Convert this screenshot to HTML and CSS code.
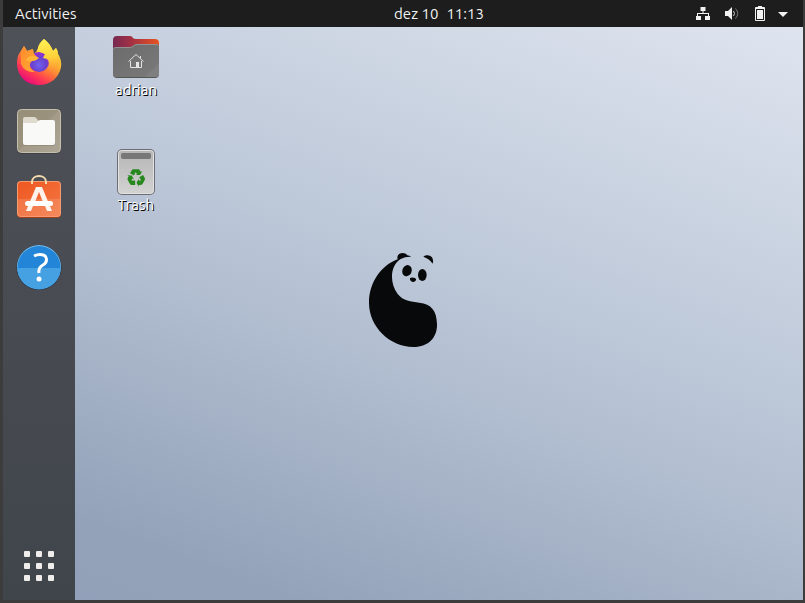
FILE: index.html
```html
<!DOCTYPE html>
<html lang="en">
<head>
<meta charset="utf-8">
<title>Desktop</title>
<link rel="stylesheet" href="styles.css">
</head>
<body>
<div class="screen">
  <div class="wallpaper">
    <svg class="panda" viewBox="-6 0 330 360" aria-hidden="true">
      <path d="M143 58C95 75 56 128 57 190C58 262 120 321 190 321C238 321 262 290 261 252C260 212 244 192 208 188C182 185 160 183 143 162C118 130 120 76 152 57Q166 49 184 50Q178 47 172 46C166 37 150 36 144 46Q141 50 143 58Z"/>
      <path d="M220 50C229 43 242 45 247 53Q251 61 248 71Q238 56 220 50Z"/>
      <ellipse cx="171" cy="92" rx="14" ry="17" transform="rotate(22 171 92)"/>
      <ellipse cx="217" cy="105" rx="13" ry="18"/>
      <path d="M180 115Q184 110 195 114Q201 118 196 123Q189 129 182 122Q179 119 180 115Z"/>
    </svg>
  </div>

  <header class="topbar">
    <button class="bar-button activities" type="button">Activities</button>
    <button class="bar-button clock" type="button"><span>dez 10</span><span>11:13</span></button>
    <button class="bar-button status" type="button" aria-label="System menu">
      <svg viewBox="0 0 16 16"><path d="M5.500 1h5v4h-2v2H14v3h1v4h-5v-4h3V8H3v2h3v4H1v-4h1V7h5.500V5h-2z"/></svg>
      <svg viewBox="0 0 16 16"><path d="M2 5h3l4-4v13l-4-4H2z"/><path class="wave" d="M10.500 5Q12.500 7.500 10.500 10"/><path class="wave faint" d="M12.500 2.500Q17 7.500 12.500 12.500"/></svg>
      <svg viewBox="0 0 16 16"><path fill-rule="evenodd" d="M7 0h4v1h2q1 0 1 1v12q0 1-1 1H5q-1 0-1-1V2q0-1 1-1h2zM5 3v11h8V3zM6 4h6v9H6z"/></svg>
      <svg class="caret" viewBox="2 0 8 16"><path d="M1 6h10l-5 5z"/></svg>
    </button>
  </header>

  <nav class="dock" aria-label="Applications">
    <button class="app" type="button" aria-label="Firefox">
      <svg viewBox="0 0 48 48">
        <defs>
          <linearGradient id="fox" x1=".85" y1=".12" x2=".3" y2="1"><stop offset="0" stop-color="#fff04a"/><stop offset=".35" stop-color="#ffbc2e"/><stop offset=".58" stop-color="#ff7139"/><stop offset=".78" stop-color="#ff3655"/><stop offset="1" stop-color="#e5097f"/></linearGradient>
          <linearGradient id="flame" x1=".4" y1="0" x2=".5" y2="1"><stop offset="0" stop-color="#fff253"/><stop offset=".5" stop-color="#ffd23a"/><stop offset="1" stop-color="#ff6c38" stop-opacity="0"/></linearGradient>
          <radialGradient id="globe" cx=".5" cy=".65" r=".65"><stop offset="0" stop-color="#7360ef"/><stop offset=".55" stop-color="#6a42cd"/><stop offset="1" stop-color="#9b2bd2"/></radialGradient>
          <linearGradient id="head" x1="0" y1="0" x2="1" y2="1"><stop offset="0" stop-color="#ff8a2c"/><stop offset="1" stop-color="#ffad35"/></linearGradient>
        </defs>
        <path fill="url(#fox)" d="M29 0C33 3 36 7 38 12L41 9Q43 12 43 15Q47 21 46 28C44 39 35 46 24 46C11 46 2 37 2 24Q2 16 6 12L9 7Q11 10 12 12L18 10Q18 13 19 15Q24 10 23 8Q25 3 29 0Z"/>
        <circle cx="24" cy="23" r="10" fill="url(#globe)"/>
        <path fill="url(#flame)" d="M29 0C33 3 36 7 38 12L41 9Q43 12 43 15Q47 23 44 32C42 38 35 40 28 35C34 32 36 25 32 20L28 19L30 15Q25 13 22 12Q24 4 29 0Z"/>
        <path fill="url(#head)" d="M6 12L9 7L12 12L18 10Q18 14 20 16Q22 18 23 19Q21 22 17 22C13 25 15 31 20 33Q10 34 6 25Z"/>
        <path fill="#ffb638" d="M11 21Q14 16 20 17L24 19Q21 22 17 22Q13 23 11 21Z"/>
      </svg>
    </button>
    <button class="app" type="button" aria-label="Files">
      <svg viewBox="0 0 48 48">
        <defs><linearGradient id="tan" x1="0" y1="0" x2="1" y2="1"><stop offset="0" stop-color="#978f79"/><stop offset=".48" stop-color="#9a927d"/><stop offset=".5" stop-color="#a39b88"/><stop offset="1" stop-color="#ada694"/></linearGradient></defs>
        <rect x="2" y="3" width="44" height="44" rx="5" fill="#34363a" opacity=".6"/>
        <rect x="2.500" y="2.500" width="43" height="43" rx="4" fill="url(#tan)" stroke="#c5bfae"/>
        <path d="M8 15V12Q8 10 10 10H19Q21 10 22 12L24 15L20 18H8Z" fill="#dedace"/>
        <path d="M8 16H20Q22 16 23 15Q24 13 26 13H38Q40 13 40 15V37Q40 39 38 39H10Q8 39 8 37Z" fill="#89816d" opacity=".6"/>
        <path d="M8 16H20Q22 16 23 14Q24 13 26 13H38Q40 13 40 15V36Q40 38 38 38H10Q8 38 8 36Z" fill="#f9f9f8"/>
      </svg>
    </button>
    <button class="app" type="button" aria-label="Ubuntu Software">
      <svg viewBox="0 0 48 48">
        <defs><linearGradient id="orange" x1="0" y1="0" x2="1" y2="1"><stop offset="0" stop-color="#ef5721"/><stop offset="1" stop-color="#f37843"/></linearGradient></defs>
        <rect x="2" y="7" width="44" height="36" rx="4" fill="#a43f1e"/>
        <rect x="2" y="6" width="44" height="36" rx="4" fill="#f69a70"/>
        <rect x="3" y="7" width="42" height="34" rx="3" fill="url(#orange)"/>
        <path d="M3 24H45V38Q45 41 42 41H6Q3 41 3 38Z" fill="#fff" opacity=".13"/>
        <path d="M17 9V7C17-1 31-1 31 7V9" fill="none" stroke="#f5dcae" stroke-width="2"/>
        <path fill-rule="evenodd" d="M21 12H27L37 36H32L30 31H18L16 36H11ZM24 17L20 27H28Z" fill="#fff3ec"/>
        <rect x="10" y="26" width="28" height="5" rx="2.500" fill="#fff"/>
      </svg>
    </button>
    <button class="app" type="button" aria-label="Help">
      <svg viewBox="0 0 48 48">
        <circle cx="24" cy="24.500" r="22.500" fill="#253342"/>
        <circle cx="24" cy="24" r="22" fill="#78bdeb"/>
        <circle cx="24" cy="24.500" r="21.500" fill="#2385d8"/>
        <path d="M2.500 25H45.500A21.500 21.500 0 0 1 2.500 25Z" fill="#45a1e1"/>
        <path d="M19 13Q22 11.500 25 11.500C33 11.500 33 19 28 22Q23 25 24 30" fill="none" stroke="#fff" stroke-width="3"/>
        <circle cx="24" cy="36" r="2.500" fill="#fff"/>
      </svg>
    </button>
    <button class="app launcher" type="button" aria-label="Show Applications">
      <svg viewBox="0 0 48 48" fill="#efeeec">
        <rect x="9" y="9" width="6" height="6" rx="1"/><rect x="21" y="9" width="6" height="6" rx="1"/><rect x="33" y="9" width="6" height="6" rx="1"/>
        <rect x="9" y="21" width="6" height="6" rx="1"/><rect x="21" y="21" width="6" height="6" rx="1"/><rect x="33" y="21" width="6" height="6" rx="1"/>
        <rect x="9" y="33" width="6" height="6" rx="1"/><rect x="21" y="33" width="6" height="6" rx="1"/><rect x="33" y="33" width="6" height="6" rx="1"/>
      </svg>
    </button>
  </nav>

  <main class="desktop">
    <button class="shortcut" type="button">
      <svg viewBox="0 0 48 48">
        <defs>
          <linearGradient id="tab"><stop offset="0" stop-color="#772953"/><stop offset=".4" stop-color="#a43043"/><stop offset="1" stop-color="#e95420"/></linearGradient>
          <linearGradient id="front" x1="0" y1="0" x2="1" y2="1"><stop offset="0" stop-color="#6b6b6b"/><stop offset="1" stop-color="#7a7a7a"/></linearGradient>
        </defs>
        <path d="M1 7Q1 3 5 3H18Q20 3 21 5Q22 6 24 6H43Q47 6 47 10V20H1Z" fill="url(#tab)"/>
        <path d="M1 17Q1 14 4 14H18Q20 14 22 12Q23 11 25 11H44Q47 11 47 14V41Q47 45 43 45H5Q1 45 1 41Z" fill="#555"/>
        <path d="M1 17Q1 14 4 14H18Q20 14 22 12Q23 11 25 11H44Q47 11 47 14V40Q47 44 43 44H5Q1 44 1 40Z" fill="#929292"/>
        <path d="M1 18Q1 15 4 15H18Q20 15 22 13Q23 12 25 12H44Q47 12 47 15V40Q47 44 43 44H5Q1 44 1 40Z" fill="url(#front)"/>
        <path d="M47 30V40Q47 44 43 44H33Z" fill="#fff" opacity=".06"/>
        <path d="M16.500 28.500L24 21.500L31.500 28.500M18.500 28V34.500H29.500V28M28.500 25V23" fill="none" stroke="#e3e3e3"/>
        <path d="M24 29H27V35H24Z" fill="#e3e3e3"/>
      </svg>
      <span>adrian</span>
    </button>
    <button class="shortcut" type="button">
      <svg viewBox="0 0 48 48">
        <defs><linearGradient id="bin" x1="0" y1="0" x2="0" y2="1"><stop offset="0" stop-color="#b5b5b5"/><stop offset="1" stop-color="#d2d2d2"/></linearGradient></defs>
        <rect x="5" y="1" width="38" height="46" rx="5" fill="#6b6e72"/>
        <rect x="6" y="2" width="36" height="44" rx="4" fill="#e2e2e2"/>
        <rect x="7" y="3" width="34" height="42" rx="3" fill="url(#bin)"/>
        <rect x="9" y="5" width="30" height="6" rx="2" fill="#777"/>
        <path transform="translate(13.500 18.500) scale(.88)" fill="#26881d" d="M21.820 15.420L19.320 19.750C18.830 20.610 17.920 21.060 17 21H15V23L12.500 18.500L15 14V16H17.820L15.600 12.150L19.930 9.650L21.730 12.770C22.250 13.540 22.320 14.570 21.820 15.420M9.210 3.060H14.210C15.190 3.060 16.040 3.630 16.450 4.450L17.450 6.190L19.180 5.190L16.540 9.600L11.390 9.690L13.120 8.690L11.710 6.240L9.500 10.090L5.160 7.590L6.960 4.470C7.370 3.640 8.220 3.060 9.210 3.060M5.050 19.760L2.550 15.430C2.060 14.580 2.130 13.560 2.640 12.790L3.640 11.060L1.910 10.060L7.050 10.140L9.700 14.560L7.970 13.560L6.560 16H11V21H7.400C6.470 21.070 5.550 20.610 5.050 19.760Z"/>
      </svg>
      <span>Trash</span>
    </button>
  </main>
</div>
</body>
</html>
```
FILE: styles.css
```css
* {
  box-sizing: border-box;
}

body {
  margin: 0;
  min-height: 100vh;
  display: flex;
  padding: 0 2px 3px 3px;
  background: #3c3c3c;
  font-family: Ubuntu, "Noto Sans", sans-serif;
  font-size: 15px;
}

button {
  margin: 0;
  padding: 0;
  border: 0;
  background: none;
  color: inherit;
  font: inherit;
}

svg {
  display: block;
  overflow: visible;
}

.screen {
  position: relative;
  isolation: isolate;
  flex: 1;
  display: grid;
  grid-template-columns: 72px 1fr;
  grid-template-rows: 27px 1fr;
}

.wallpaper {
  position: absolute;
  inset: 0;
  z-index: -1;
  display: grid;
  place-items: center;
  background: linear-gradient(201deg, #e1e7f1 0%, #cad3e1 28%, #b5c1d3 54%, #93a2b9 88%, #91a0b8 100%);
}

.panda {
  width: 110px;
  height: 120px;
  fill: #08090b;
}

.topbar {
  grid-column: 1 / -1;
  display: grid;
  grid-template-columns: 1fr auto 1fr;
  align-items: center;
  padding: 0 16px 0 12px;
  background: #1d1d1d;
  color: #f2f2f2;
}

.bar-button {
  line-height: 26px;
}

.activities {
  justify-self: start;
}

/* Centred over the area to the right of the dock. */
.clock {
  display: flex;
  gap: 8px;
  margin-left: 76px;
}

.status {
  justify-self: end;
  display: flex;
  align-items: center;
  gap: 12px;
  fill: #f2f2f2;
}

.status svg {
  width: 16px;
  height: 16px;
}

.status .caret {
  width: 8px;
}

.wave {
  fill: none;
  stroke: #d0d0d0;
}

.faint {
  stroke: #777;
}

.dock {
  display: flex;
  flex-direction: column;
  align-items: center;
  gap: 20px;
  padding: 12px 0 10px;
  background: linear-gradient(#4e5157, #484b51 50%, #40454c);
}

.app svg,
.shortcut svg {
  width: 48px;
  height: 48px;
}

.launcher {
  margin-top: auto;
}

.desktop {
  display: flex;
  flex-direction: column;
  align-items: flex-start;
  gap: 49px;
  padding: 6px 13px;
}

.shortcut {
  width: 96px;
  display: flex;
  flex-direction: column;
  align-items: center;
  color: #fff;
  line-height: 18px;
  text-shadow: 1px 1px 0 #000;
}
```
